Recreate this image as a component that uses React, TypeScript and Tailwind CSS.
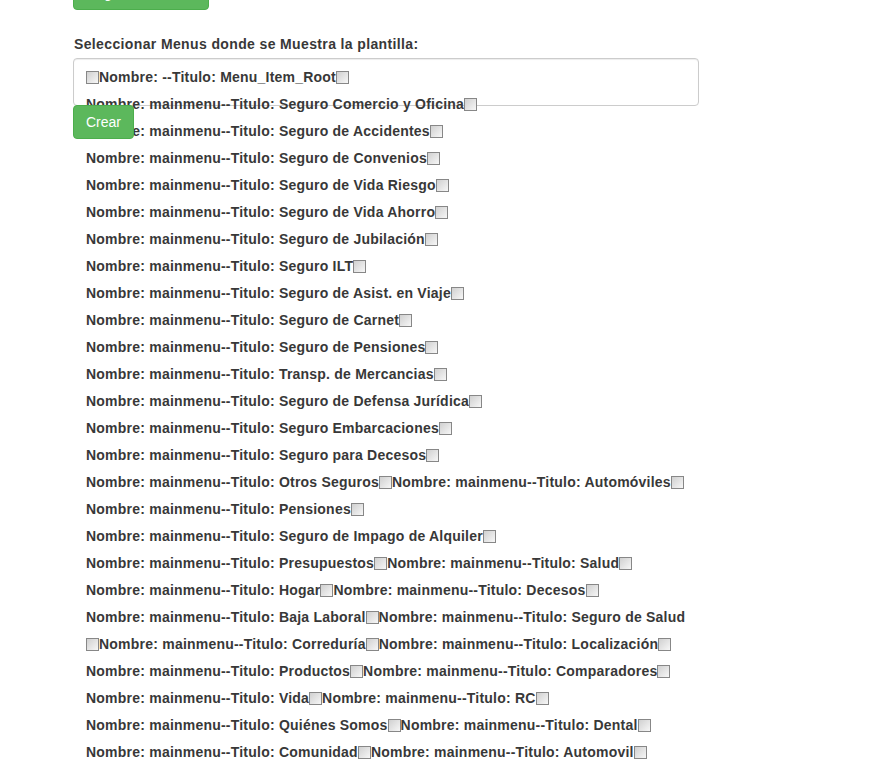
const P = "Nombre: mainmenu--Titulo: ";

// "|" marks a checkbox
const rows: string[] = [
  "|Nombre: --Titulo: Menu_Item_Root|",
  P + "Seguro Comercio y Oficina|",
  P + "Seguro de Accidentes|",
  P + "Seguro de Convenios|",
  P + "Seguro de Vida Riesgo|",
  P + "Seguro de Vida Ahorro|",
  P + "Seguro de Jubilación|",
  P + "Seguro ILT|",
  P + "Seguro de Asist. en Viaje|",
  P + "Seguro de Carnet|",
  P + "Seguro de Pensiones|",
  P + "Transp. de Mercancias|",
  P + "Seguro de Defensa Jurídica|",
  P + "Seguro Embarcaciones|",
  P + "Seguro para Decesos|",
  P + "Otros Seguros|" + P + "Automóviles|",
  P + "Pensiones|",
  P + "Seguro de Impago de Alquiler|",
  P + "Presupuestos|" + P + "Salud|",
  P + "Hogar|" + P + "Decesos|",
  P + "Baja Laboral|" + P + "Seguro de Salud",
  "|" + P + "Correduría|" + P + "Localización|",
  P + "Productos|" + P + "Comparadores|",
  P + "Vida|" + P + "RC|",
  P + "Quiénes Somos|" + P + "Dental|",
  P + "Comunidad|" + P + "Automovil|",
];

function Check() {
  return (
    <span className="inline-block w-[13px] h-[13px] shrink-0 -mt-[1px] border border-[#878787] bg-gradient-to-br from-[#d0d0d0] to-[#f7f7f7]" />
  );
}

function Row({ text }: { text: string }) {
  const parts = text.split("|");
  return (
    <div className="flex items-center h-[27px] whitespace-nowrap">
      {parts.map((p, i) => (
        <span key={i} className="flex items-center">
          {i > 0 && <Check />}
          {p && <span>{p}</span>}
        </span>
      ))}
    </div>
  );
}

export default function App() {
  return (
    <div className="min-h-screen bg-white font-['Liberation_Sans',Arial,sans-serif] text-[14px] text-[#383838]">
      <div className="flex flex-col items-start pl-[73px]">
        <button className="-mt-[24px] h-[34px] w-[136px] rounded-[4px] border border-[#4cae4c] bg-[#5cb85c] text-white leading-[20px]">
          Registrar Plantilla
        </button>
        <label className="mt-[24px] mb-[4px] ml-[1px] font-bold leading-[20px] tracking-[0.37px]">
          Seleccionar Menus donde se Muestra la plantilla:
        </label>
        <div className="w-[626px] h-[48px] rounded-[4px] border border-[#ccc] px-[12px] pt-[5px] font-bold tracking-[0.22px] shadow-[inset_0_1px_1px_rgba(0,0,0,0.075)]">
          {rows.map((r, i) => (
            <Row key={i} text={r} />
          ))}
        </div>
        <button className="-mt-[1px] h-[34px] rounded-[4px] border border-[#4cae4c] bg-[#5cb85c] px-[12px] text-white leading-[20px]">
          Crear
        </button>
      </div>
    </div>
  );
}
